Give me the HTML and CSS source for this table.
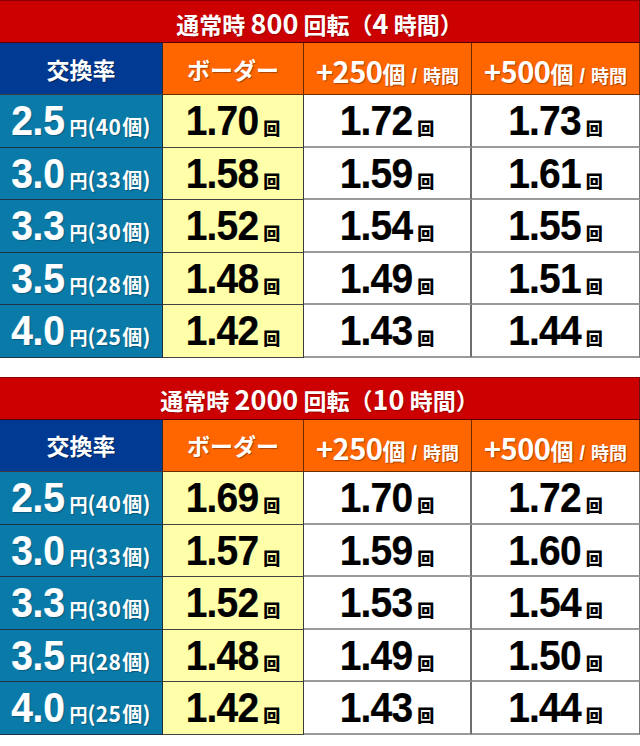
FILE: index.html
```html
<!DOCTYPE html>
<html lang="ja">
<head>
<meta charset="utf-8">
<title>ボーダー表</title>
<link rel="stylesheet" href="styles.css">
</head>
<body>
<div class="page">
  <div class="tbl">
    <div class="title"><span class="tt">通常時 <span class="tn">800</span> 回転（<span class="tn">4</span> 時間）</span></div>
    <div class="hd hd-blue">交換率</div>
    <div class="hd hd-or">ボーダー</div>
    <div class="hd hd-or c3"><span class="hn">+250</span><span class="hk">個</span><span class="hs"><span class="sl">/</span>時間</span></div>
    <div class="hd hd-or c4"><span class="hn">+500</span><span class="hk">個</span><span class="hs"><span class="sl">/</span>時間</span></div>

    <div class="rate"><span class="big">2.5</span><span class="yen">円</span><span class="sub">(40<span class="ko">個</span>)</span></div>
    <div class="val yel"><span class="big">1.70</span><span class="kai">回</span></div>
    <div class="val wh c3"><span class="big">1.72</span><span class="kai">回</span></div>
    <div class="val wh c4"><span class="big">1.73</span><span class="kai">回</span></div>

    <div class="rate"><span class="big">3.0</span><span class="yen">円</span><span class="sub">(33<span class="ko">個</span>)</span></div>
    <div class="val yel"><span class="big">1.58</span><span class="kai">回</span></div>
    <div class="val wh c3"><span class="big">1.59</span><span class="kai">回</span></div>
    <div class="val wh c4"><span class="big">1.61</span><span class="kai">回</span></div>

    <div class="rate"><span class="big">3.3</span><span class="yen">円</span><span class="sub">(30<span class="ko">個</span>)</span></div>
    <div class="val yel"><span class="big">1.52</span><span class="kai">回</span></div>
    <div class="val wh c3"><span class="big">1.54</span><span class="kai">回</span></div>
    <div class="val wh c4"><span class="big">1.55</span><span class="kai">回</span></div>

    <div class="rate"><span class="big">3.5</span><span class="yen">円</span><span class="sub">(28<span class="ko">個</span>)</span></div>
    <div class="val yel"><span class="big">1.48</span><span class="kai">回</span></div>
    <div class="val wh c3"><span class="big">1.49</span><span class="kai">回</span></div>
    <div class="val wh c4"><span class="big">1.51</span><span class="kai">回</span></div>

    <div class="rate"><span class="big">4.0</span><span class="yen">円</span><span class="sub">(25<span class="ko">個</span>)</span></div>
    <div class="val yel"><span class="big">1.42</span><span class="kai">回</span></div>
    <div class="val wh c3"><span class="big">1.43</span><span class="kai">回</span></div>
    <div class="val wh c4"><span class="big">1.44</span><span class="kai">回</span></div>
  </div>

  <div class="tbl">
    <div class="title"><span class="tt">通常時 <span class="tn">2000</span> 回転（<span class="tn">10</span> 時間）</span></div>
    <div class="hd hd-blue">交換率</div>
    <div class="hd hd-or">ボーダー</div>
    <div class="hd hd-or c3"><span class="hn">+250</span><span class="hk">個</span><span class="hs"><span class="sl">/</span>時間</span></div>
    <div class="hd hd-or c4"><span class="hn">+500</span><span class="hk">個</span><span class="hs"><span class="sl">/</span>時間</span></div>

    <div class="rate"><span class="big">2.5</span><span class="yen">円</span><span class="sub">(40<span class="ko">個</span>)</span></div>
    <div class="val yel"><span class="big">1.69</span><span class="kai">回</span></div>
    <div class="val wh c3"><span class="big">1.70</span><span class="kai">回</span></div>
    <div class="val wh c4"><span class="big">1.72</span><span class="kai">回</span></div>

    <div class="rate"><span class="big">3.0</span><span class="yen">円</span><span class="sub">(33<span class="ko">個</span>)</span></div>
    <div class="val yel"><span class="big">1.57</span><span class="kai">回</span></div>
    <div class="val wh c3"><span class="big">1.59</span><span class="kai">回</span></div>
    <div class="val wh c4"><span class="big">1.60</span><span class="kai">回</span></div>

    <div class="rate"><span class="big">3.3</span><span class="yen">円</span><span class="sub">(30<span class="ko">個</span>)</span></div>
    <div class="val yel"><span class="big">1.52</span><span class="kai">回</span></div>
    <div class="val wh c3"><span class="big">1.53</span><span class="kai">回</span></div>
    <div class="val wh c4"><span class="big">1.54</span><span class="kai">回</span></div>

    <div class="rate"><span class="big">3.5</span><span class="yen">円</span><span class="sub">(28<span class="ko">個</span>)</span></div>
    <div class="val yel"><span class="big">1.48</span><span class="kai">回</span></div>
    <div class="val wh c3"><span class="big">1.49</span><span class="kai">回</span></div>
    <div class="val wh c4"><span class="big">1.50</span><span class="kai">回</span></div>

    <div class="rate"><span class="big">4.0</span><span class="yen">円</span><span class="sub">(25<span class="ko">個</span>)</span></div>
    <div class="val yel"><span class="big">1.42</span><span class="kai">回</span></div>
    <div class="val wh c3"><span class="big">1.43</span><span class="kai">回</span></div>
    <div class="val wh c4"><span class="big">1.44</span><span class="kai">回</span></div>
  </div>
</div>
</body>
</html>
```

FILE: styles.css
```css
* { box-sizing: border-box; }
html, body { margin: 0; padding: 0; background: #fff; }
body {
  width: 640px;
  font-family: "Liberation Sans", "Noto Sans CJK JP", sans-serif;
  font-weight: 700;
}
.page {
  display: flex;
  flex-direction: column;
  gap: 19px;
}
.tbl {
  display: grid;
  grid-template-columns: 163px 141px 168px 168px;
  grid-template-rows: 43px 52px repeat(5, 52.6px);
}
.tbl > div {
  display: flex;
  align-items: center;
  justify-content: center;
  white-space: nowrap;
  border-right: 1px solid #3c3c3c;
  border-bottom: 1px solid #3c3c3c;
}
.tbl > .c4 { border-right-color: #777; }
.title {
  grid-column: 1 / 5;
  background: #cc0000;
  color: #fff;
  font-family: "Noto Sans CJK JP", sans-serif;
  font-size: 23px;
  border-top: 1px solid #8a0000;
  border-bottom-color: #5a0000 !important;
  border-right-color: #6a1010 !important;
  padding-top: 1px;
  text-shadow: 1px 1px 1px rgba(0,0,0,.25);
}
.title .tt { white-space: pre; }
.title .tn {
  font-size: 27px;
  font-family: "Noto Sans CJK JP", sans-serif;
  font-weight: 700;
}
.hd {
  color: #fff;
  text-shadow: 1px 1px 1px rgba(0,0,0,.35);
}
.hd-blue {
  background: #003a93;
  font-family: "Noto Sans CJK JP", sans-serif;
  font-size: 23px;
  border-right-color: #2a2a2a !important;
}
.hd-or {
  background: #ff6600;
  font-family: "Noto Sans CJK JP", sans-serif;
  font-size: 23px;
  border-right-color: #6a2a00 !important;
  border-bottom-color: #6a3000 !important;
}
.hd-or.c3, .hd-or.c4 { align-items: baseline; padding-top: 6px; }
.hn {
  font-family: "Noto Sans CJK JP", sans-serif;
  font-size: 29px;
  font-weight: 700;
  letter-spacing: -0.5px;
}
.hk {
  font-family: "Noto Sans CJK JP", sans-serif;
  font-size: 23px;
  font-weight: 700;
}
.hs {
  font-family: "Noto Sans CJK JP", sans-serif;
  font-size: 18px;
  margin-left: 6px;
}
.hs .sl {
  font-family: "Liberation Sans", sans-serif;
  font-weight: 700;
  font-size: 20px;
  margin-right: 6px;
}
.rate {
  background: #0a7aa8;
  color: #fff;
  align-items: baseline !important;
  padding-top: 5px;
  border-right-color: #1e2e3a !important;
  border-bottom-color: #1e3444 !important;
  text-shadow: 1px 1px 1px rgba(0,0,0,.25);
}
.big {
  display: inline-block;
  font-family: "Liberation Sans", sans-serif;
  font-size: 39px;
  font-weight: 700;
  letter-spacing: -0.8px;
  transform: scaleY(1.08);
  transform-origin: 50% 85%;
  -webkit-text-stroke: 0.2px currentColor;
}
.rate .big { letter-spacing: -0.3px; }
.yen {
  font-family: "Noto Sans CJK JP", sans-serif;
  font-size: 18px;
  margin-left: 5px;
}
.sub {
  font-family: "Noto Sans CJK JP", sans-serif;
  font-size: 21px;
  letter-spacing: 0.3px;
}
.sub .ko {
  font-size: 20px;
  margin-left: 1px;
}
.val {
  color: #000;
  align-items: baseline !important;
  padding-top: 5px;
}
.yel { background: #ffffaa; border-right-color: #3a3a3a !important; border-bottom-color: #444 !important; }
.wh { background: #fff; border-bottom: 2px solid #9a9a9a !important; }
.wh.c3 { border-right: 2px solid #6e6e6e !important; }
.kai {
  font-family: "Noto Sans CJK JP", sans-serif;
  font-weight: 900;
  font-size: 17px;
  margin-left: 5px;
}
```
